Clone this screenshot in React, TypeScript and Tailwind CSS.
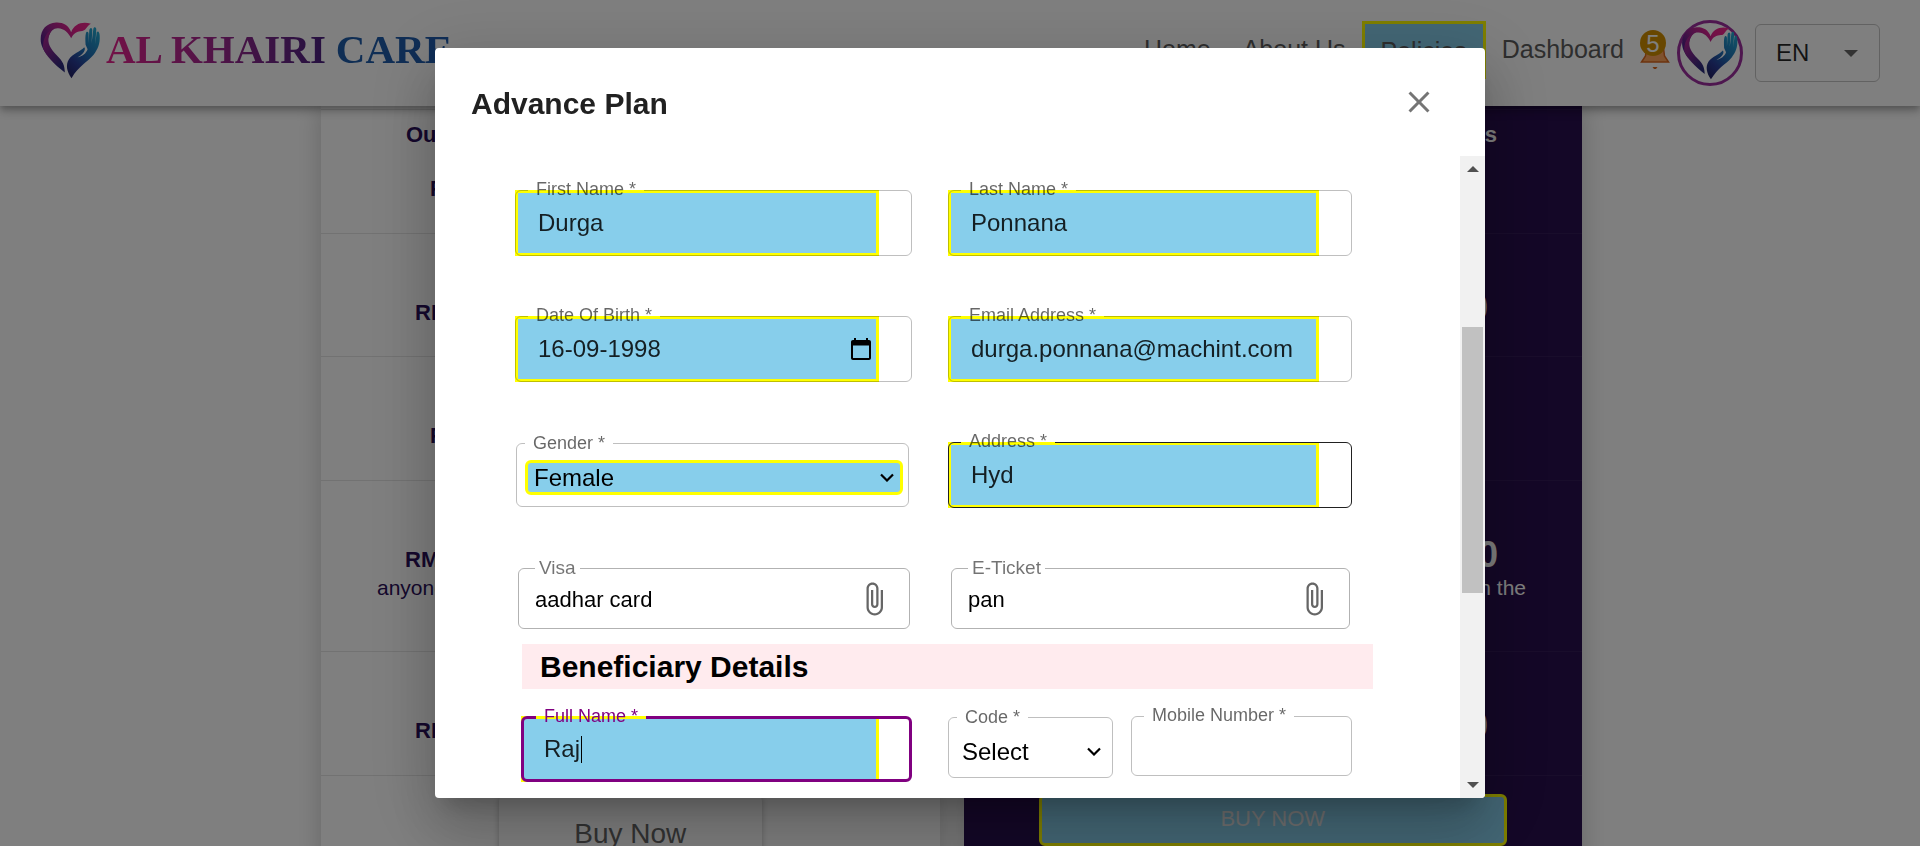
import React from "react";

function HeartLogo({ className, id }: { className: string; id: string }) {
  return (
    <svg viewBox="12 20 182 172" className={className} aria-hidden="true">
      <defs>
        <linearGradient id={`${id}-heart`} x1="0" y1="0.6" x2="1" y2="0.1">
          <stop offset="0" stopColor="#4a2089" />
          <stop offset="0.35" stopColor="#a32590" />
          <stop offset="0.7" stopColor="#e6218d" />
          <stop offset="1" stopColor="#ee2a8c" />
        </linearGradient>
        <linearGradient id={`${id}-shade`} x1="0" y1="0" x2="0.6" y2="1">
          <stop offset="0" stopColor="#c3258f" />
          <stop offset="0.4" stopColor="#8a2490" />
          <stop offset="1" stopColor="#2b2a7c" />
        </linearGradient>
        <linearGradient id={`${id}-hand`} x1="0.8" y1="0" x2="0.2" y2="1">
          <stop offset="0" stopColor="#22a6cf" />
          <stop offset="0.45" stopColor="#1f6fb5" />
          <stop offset="0.75" stopColor="#283a94" />
          <stop offset="1" stopColor="#232368" />
        </linearGradient>
      </defs>
      <path
        fill={`url(#${id}-heart)`}
        d="M105 53C97 31 80 23 60 24C32 25 14 45 14 74C14 92 22 106 34 122C30 100 32 84 38 66C44 48 54 40 66 41C84 42 97 54 105 71C112 55 124 50 138 49C150 49 149 36 164 28C140 19 113 28 105 53Z"
      />
      <path
        fill={`url(#${id}-shade)`}
        d="M50 43C30 54 20 74 21 100C28 122 54 148 86 173C86 152 80 140 64 124C42 102 34 86 38 66C41 54 46 47 50 43Z"
      />
      <path
        fill={`url(#${id}-hand)`}
        d="M106 190C92 170 88 150 98 134C108 118 134 110 144 98C148 102 146 110 138 118C134 123 128 125 124 128C138 126 150 116 154 104L148 90C147 74 147 64 149 56C151 49 157 51 157 58L157 86L159 48C160 38 168 38 168 47L166 86L171 44C172 36 180 37 180 45L177 88L181 54C184 48 189 49 190 62C192 88 184 104 172 120C154 142 128 152 106 190Z"
      />
    </svg>
  );
}

function Chevron({ className }: { className: string }) {
  return (
    <svg viewBox="0 0 14 9" className={`pointer-events-none h-[9px] w-[14px] ${className}`} aria-hidden="true">
      <path d="M1 1.5L7 7.5L13 1.5" fill="none" stroke="#000" strokeWidth="2.2" />
    </svg>
  );
}

function Clip() {
  return (
    <svg viewBox="0 0 24 24" className="size-9 fill-[#666666]" aria-hidden="true">
      <path d="M16.5 6v11.5c0 2.21-1.79 4-4 4s-4-1.79-4-4V5c0-1.38 1.12-2.5 2.5-2.5s2.5 1.12 2.5 2.5v10.5c0 .55-.45 1-1 1s-1-.45-1-1V6H10v9.5c0 1.38 1.12 2.5 2.5 2.5s2.5-1.12 2.5-2.5V5c0-2.21-1.79-4-4-4S7 2.79 7 5v12.5c0 3.04 2.46 5.5 5.5 5.5s5.5-2.46 5.5-5.5V6h-1.5z" />
    </svg>
  );
}

function Outline({
  id,
  label,
  variant = "text",
}: {
  id: string;
  label: string;
  variant?: "text" | "hover" | "focus" | "select" | "file";
}) {
  const frames = {
    text: "-top-[11px] border px-3 border-black/25",
    hover: "-top-[11px] border px-3 border-[#212121]",
    focus: "-top-[10px] border-[3px] px-3 border-[#800080]",
    select: "-top-[10px] border px-2 border-black/25",
    file: "-top-[10px] border px-4 border-black/30",
  };
  const legends = {
    text: "px-2 pb-[2px] text-[18px] text-black/60",
    hover: "px-2 pb-[2px] text-[18px] text-black/60",
    focus: "px-2 pb-[2px] text-[18px] text-[#800080]",
    select: "px-2 text-[18px] text-black/60",
    file: "px-1 text-[19px] text-black/55",
  };
  return (
    <fieldset className={`pointer-events-none absolute inset-x-0 bottom-0 rounded-md ${frames[variant]}`}>
      <legend className={`leading-5 ${legends[variant]}`}>
        <label htmlFor={id}>{label}</label>
      </legend>
    </fieldset>
  );
}

const filled =
  "h-[66px] w-[calc(100%-33px)] border-[3px] border-[#ffff00] bg-[#87ceeb] px-5 text-2xl text-black/85 outline-none";

function TextField({
  id,
  label,
  value,
  variant = "text",
  children,
}: {
  id: string;
  label: string;
  value: string;
  variant?: "text" | "hover" | "focus";
  children?: React.ReactNode;
}) {
  return (
    <div className="relative flex">
      <input id={id} type="text" defaultValue={value} className={filled} />
      {children}
      <Outline id={id} label={label} variant={variant} />
    </div>
  );
}

function FileField({ id, label, value }: { id: string; label: string; value: string }) {
  return (
    <div className="relative mr-[2px] ml-[3px] flex h-[61px] items-center pr-[18px] pl-[17px]">
      <input id={id} type="text" defaultValue={value} className="min-w-0 flex-1 pt-[2px] text-[22px] text-black outline-none" />
      <button type="button" aria-label={`Attach ${label}`}>
        <Clip />
      </button>
      <Outline id={id} label={label} variant="file" />
    </div>
  );
}

const leftRows = [
  { title: "Our Standard Cover", pad: "pl-[85px]", amount: "Free", amountPad: "pl-[109px]", note: "" },
  { title: "", pad: "", amount: "RM 0", amountPad: "pl-[94px]", note: "" },
  { title: "", pad: "", amount: "Free", amountPad: "pl-[109px]", note: "" },
  { title: "", pad: "", amount: "RM 0", amountPad: "pl-[84px]", note: "anyone" },
  { title: "", pad: "", amount: "RM 0", amountPad: "pl-[94px]", note: "" },
];

const rightRows = [
  { title: "Benefits", amount: "", amountPad: "", note: "" },
  { title: "", amount: "0", amountPad: "pr-[94px]", note: "" },
  { title: "", amount: "", amountPad: "", note: "" },
  { title: "", amount: "0", amountPad: "pr-[84px]", note: "in the" },
  { title: "", amount: "0", amountPad: "pr-[94px]", note: "" },
];

function Plans() {
  return (
    <main className="mx-auto flex w-full max-w-[1261px] flex-1 gap-6">
      <section className="flex-1 bg-white text-[22px] text-[#2a0f5a] shadow-[0_0_24px_rgba(0,0,0,0.2)]">
        <div className="h-1 border-b border-black/10" />
        {leftRows.map((r, i) => (
          <div key={i} className={`border-b border-black/10 ${r.note ? "h-[171px]" : i === 1 ? "h-[123px]" : "h-[124px]"}`}>
            <p className={`h-[65px] pt-[11px] font-bold leading-7 ${r.pad}`}>{r.title}</p>
            <p className={`font-bold leading-7 ${r.amountPad}`}>{r.amount}</p>
            <p className="pl-14 text-[21px] leading-7">{r.note}</p>
          </div>
        ))}
        <div className="flex justify-center pt-[19px]">
          <button type="button" className="h-[72px] w-[263px] rounded-md pt-[6px] text-[28px] text-[#666666] shadow-[0_0_6px_rgba(0,0,0,0.25)]">
            Buy Now
          </button>
        </div>
      </section>
      <section className="flex-1 bg-[#280e4e] text-right text-[22px] text-white shadow-[0_0_24px_rgba(0,0,0,0.2)]">
        <div className="h-1 border-b border-white/5" />
        {rightRows.map((r, i) => (
          <div key={i} className={`border-b border-white/5 ${r.note ? "h-[171px]" : i === 1 ? "h-[123px]" : "h-[124px]"}`}>
            <p className="h-[65px] pt-[11px] pr-[85px] font-bold leading-7">{r.title}</p>
            <p className={`h-7 text-4xl font-bold leading-[18px] ${r.amountPad}`}>{r.amount}</p>
            <p className="pr-14 text-[21px] leading-7">{r.note}</p>
          </div>
        ))}
        <div className="flex justify-center pt-[18px]">
          <button type="button" className="h-[52px] w-[468px] rounded-md border-[3px] border-[#ffff00] bg-[#87ceeb] pb-1 text-[22px] text-[#e0e0e0]">
            BUY NOW
          </button>
        </div>
      </section>
    </main>
  );
}

function Header() {
  return (
    <header className="relative z-10 flex h-[106px] shrink-0 items-center bg-white px-10 shadow-[0_3px_6px_-1px_rgba(0,0,0,0.2),0_6px_8px_0_rgba(0,0,0,0.14),0_1px_15px_0_rgba(0,0,0,0.12)]">
      <a href="#" className="flex items-center pb-[7px] font-['Liberation_Serif',serif] text-[41px] leading-none font-bold">
        <HeartLogo id="brand" className="h-[58px] w-[61px]" />
        <span className="ml-[5px] bg-linear-to-r from-[#e6218d] via-[#a0268f] to-[#4a2080] bg-clip-text text-transparent">
          AL KHAIRI
        </span>
        <span className="ml-[10px] bg-linear-to-r from-[#1f5ca8] to-[#1f5cae] bg-clip-text text-transparent">CARE</span>
      </a>
      <nav className="ml-auto flex items-center pb-[6px] text-[25px] text-[#5c5c5c]">
        <a href="#" className="mr-8">Home</a>
        <a href="#" className="mr-4">About Us</a>
        <a href="#" className="mr-4 flex h-[58px] items-center border-[3px] border-[#ffff00] bg-[#87ceeb] px-4 pt-1">
          Policies
        </a>
        <a href="#">Dashboard</a>
      </nav>
      <button type="button" aria-label="Notifications" className="ml-4">
        <svg viewBox="0 0 30 42" className="mb-1 h-[42px] w-[30px]" aria-hidden="true">
          <path d="M7 14H23L24.500 26L28.500 32H1.500L5.500 26Z" fill="#ffa45c" stroke="#d9671f" strokeWidth="1.500" />
          <path d="M12.500 37H17.500L16 39H14Z" fill="#d9671f" />
          <circle cx="13" cy="13" r="13" fill="#d18f00" />
          <text x="13" y="22" textAnchor="middle" fontSize="24" fill="#fff" fontFamily="Liberation Sans, sans-serif">
            5
          </text>
        </svg>
      </button>
      <a href="#" aria-label="Profile" className="ml-[7px] flex size-[66px] items-center justify-center rounded-full border-[3px] border-[#9c2f9e]">
        <HeartLogo id="avatar" className="h-[54px] w-[58px]" />
      </a>
      <div className="relative ml-3 flex w-[125px] items-center">
        <select aria-label="Language" className="h-[58px] w-full appearance-none rounded-md border border-[#c4c4c4] pl-5 text-2xl text-black/85">
          <option>EN</option>
        </select>
        <svg viewBox="0 0 14 7" className="pointer-events-none absolute right-[22px] h-[7px] w-[14px] fill-[#666666]" aria-hidden="true">
          <path d="M0 0H14L7 7Z" />
        </svg>
      </div>
    </header>
  );
}

function PlanDialog() {
  return (
    <div className="fixed inset-0 z-20 flex items-center justify-center bg-black/50">
      <div
        role="dialog"
        aria-label="Advance Plan"
        className="flex h-[calc(100%-96px)] w-[1050px] max-w-full flex-col overflow-hidden rounded bg-white shadow-[0_16px_22px_-10px_rgba(0,0,0,0.2),0_36px_57px_4px_rgba(0,0,0,0.14),0_14px_69px_12px_rgba(0,0,0,0.12)]"
      >
        <div className="flex h-[108px] shrink-0 items-center justify-between pr-12 pl-9">
          <h2 className="pt-[4px] text-3xl font-bold text-[#212121]">Advance Plan</h2>
          <button type="button" aria-label="Close">
            <svg viewBox="0 0 24 24" className="size-9 fill-[#757575]" aria-hidden="true">
              <path d="M19 6.410L17.590 5 12 10.590 6.410 5 5 6.410 10.590 12 5 17.590 6.410 19 12 13.410 17.590 19 19 17.590 13.410 12z" />
            </svg>
          </button>
        </div>
        <div className="flex min-h-0 flex-1">
          <form className="min-w-0 flex-1 overflow-hidden pt-[34px] pr-[87px] pl-20">
            <div className="mr-[21px] grid grid-cols-[397fr_404fr] items-center gap-x-9 gap-y-[60px]">
              <TextField id="first" label="First Name *" value="Durga" />
              <TextField id="last" label="Last Name *" value="Ponnana" />
              <TextField id="dob" label="Date Of Birth *" value="16-09-1998">
                <button type="button" aria-label="Pick a date" className="absolute top-[22px] right-[41px]">
                  <svg viewBox="0 0 20 22" className="h-[22px] w-5" aria-hidden="true">
                    <path d="M3 0H5V2H15V0H17V2H18C19.200 2 20 2.800 20 4V20C20 21.200 19.200 22 18 22H2C0.800 22 0 21.200 0 20V4C0 2.800 0.800 2 2 2H3ZM2 7.500V20H18V7.500Z" fillRule="evenodd" />
                  </svg>
                </button>
              </TextField>
              <TextField id="email" label="Email Address *" value="durga.ponnana@machint.com" />
              <div className="relative mr-[3px] ml-px flex h-16 items-center pt-[5px] pr-[6px] pl-[9px]">
                <select id="gender" className="h-[35px] w-full appearance-none rounded-md border-[3px] border-[#ffff00] bg-[#87ceeb] pl-[6px] text-2xl leading-7 text-black">
                  <option>Female</option>
                </select>
                <Chevron className="absolute right-[15px]" />
                <Outline id="gender" label="Gender *" variant="select" />
              </div>
              <TextField id="address" label="Address *" value="Hyd" variant="hover" />
              <FileField id="visa" label="Visa" value="aadhar card" />
              <FileField id="ticket" label="E-Ticket" value="pan" />
            </div>
            <h3 className="mt-[15px] ml-[7px] bg-[#ffebee] pl-[18px] text-3xl leading-[45px] font-bold text-black">
              Beneficiary Details
            </h3>
            <div className="mt-[27px] mr-[21px] grid grid-cols-[397fr_404fr] gap-x-9">
              <div className="ml-[6px]">
                <TextField id="full" label="Full Name *" value="Raj" variant="focus">
                  <span className="absolute top-5 left-[60px] h-[27px] w-px bg-black" />
                </TextField>
              </div>
              <div className="flex items-start gap-[18px]">
                <div className="relative mt-px flex flex-[165] items-center">
                  <select id="code" className="h-[61px] w-full appearance-none pt-2 pl-[14px] text-2xl text-black outline-none">
                    <option>Select</option>
                  </select>
                  <Chevron className="absolute right-3 mt-2" />
                  <Outline id="code" label="Code *" variant="select" />
                </div>
                <div className="relative flex flex-[221]">
                  <input id="mobile" type="tel" className="h-[60px] w-full px-5 text-2xl outline-none" />
                  <Outline id="mobile" label="Mobile Number *" />
                </div>
              </div>
            </div>
          </form>
          <div className="flex w-[25px] shrink-0 flex-col items-center justify-between bg-[#f1f1f1] pt-[10px] pb-[10px]" aria-hidden="true">
            <svg viewBox="0 0 12 6" className="h-[6px] w-3 fill-[#505050]">
              <path d="M0 6L6 0L12 6Z" />
            </svg>
            <div className="flex w-full flex-1 flex-col items-center py-2">
              <div className="flex-[147]" />
              <div className="w-[21px] flex-[266] bg-[#c1c1c1]" />
              <div className="flex-[181]" />
            </div>
            <svg viewBox="0 0 12 6" className="h-[6px] w-3 fill-[#505050]">
              <path d="M0 0L6 6L12 0Z" />
            </svg>
          </div>
        </div>
      </div>
    </div>
  );
}

export default function App() {
  return (
    <div className="flex h-screen flex-col overflow-hidden bg-white font-['Liberation_Sans',Arial,sans-serif]">
      <Header />
      <div className="flex flex-1 pr-[17px]">
        <Plans />
      </div>
      <PlanDialog />
    </div>
  );
}
